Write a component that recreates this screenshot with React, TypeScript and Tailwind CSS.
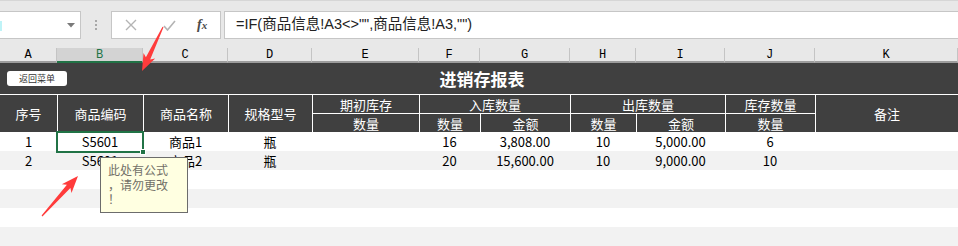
import React from "react";

const COLS =
  "grid grid-cols-[57px_86px_85px_84px_107px_61px_90px_66px_89px_90px_143px]";

const CJK = { fontFamily: '"Noto Sans CJK SC", "Liberation Sans", sans-serif' };

function arrowPts(tx: number, ty: number, px: number, py: number) {
  const dx = px - tx;
  const dy = py - ty;
  const L = Math.hypot(dx, dy);
  const ux = dx / L;
  const uy = dy / L;
  const nx = -uy;
  const ny = ux;
  const head = 17;
  const hw = 6.5;
  const sw = 2.4;
  const bx = px - ux * head;
  const by = py - uy * head;
  const cx = px - ux * (head - 3);
  const cy = py - uy * (head - 3);
  const pts = [
    [tx + nx * 0.6, ty + ny * 0.6],
    [cx + nx * sw, cy + ny * sw],
    [bx + nx * hw, by + ny * hw],
    [px, py],
    [bx - nx * hw, by - ny * hw],
    [cx - nx * sw, cy - ny * sw],
    [tx - nx * 0.6, ty - ny * 0.6],
  ];
  return pts.map((p) => p.map((v) => v.toFixed(1)).join(",")).join(" ");
}

const letters = ["A", "B", "C", "D", "E", "F", "G", "H", "I", "J", "K"];

const rows: string[][] = [
  ["1", "S5601", "商品1", "瓶", "", "16", "3,808.00", "10", "5,000.00", "6", ""],
  ["2", "S5601", "商品2", "瓶", "", "20", "15,600.00", "10", "9,000.00", "10", ""],
];

export default function App() {
  return (
    <div
      className="relative w-[958px] h-[246px] overflow-hidden bg-white"
      style={CJK}
    >
      {/* Formula bar */}
      <div className="h-[48px] bg-[#e8e8e8] border-t border-[#d6d6d6] flex items-start pt-[10px]">
        <div className="relative w-[81px] h-[28px] bg-white border border-l-0 border-[#c6c6c6]">
          <div className="absolute left-0 top-[9px] w-[2px] h-[10px] bg-[#bff3f7]" />
          <svg
            className="absolute left-[67px] top-[11px]"
            width="8"
            height="5"
            viewBox="0 0 8 5"
          >
            <polygon points="0,0 8,0 4,4.5" fill="#7a7a7a" />
          </svg>
        </div>
        <div className="w-[30px] h-[28px] flex flex-col items-center justify-center gap-[2px]">
          <div className="w-[2px] h-[2px] bg-[#a8a8a8]" />
          <div className="w-[2px] h-[2px] bg-[#a8a8a8]" />
          <div className="w-[2px] h-[2px] bg-[#a8a8a8]" />
        </div>
        <div className="w-[110px] h-[28px] bg-white border border-[#c6c6c6] flex items-center">
          <svg className="ml-[13px]" width="12" height="12" viewBox="0 0 12 12">
            <path d="M1 1 L11 11 M11 1 L1 11" stroke="#b4b4b4" strokeWidth="1.4" />
          </svg>
          <svg className="ml-[26px]" width="13" height="11" viewBox="0 0 13 11">
            <path d="M1 6 L4.5 10 L12 1" stroke="#b4b4b4" strokeWidth="1.6" fill="none" />
          </svg>
          <span
            className="ml-[21px] text-[14px] italic font-bold text-[#4a4a4a] leading-none"
            style={{ fontFamily: '"Liberation Serif", serif' }}
          >
            f<span className="text-[11px]">x</span>
          </span>
        </div>
        <div
          className="ml-[3px] flex-1 h-[28px] bg-white border border-r-0 border-[#c6c6c6] flex items-center pl-[11px] text-[14.5px] text-[#222]"
          style={{ fontFamily: '"Liberation Sans", "Noto Sans CJK SC", sans-serif' }}
        >
          =IF(商品信息!A3&lt;&gt;"",商品信息!A3,"")
        </div>
      </div>

      {/* Column letters */}
      <div
        className={`${COLS} h-[15px] bg-[#e8e8e8] text-[12px] text-black`}
        style={{ fontFamily: '"Liberation Mono", monospace' }}
      >
        {letters.map((l, i) => (
          <div
            key={l}
            className={`flex items-center justify-center leading-none border-r border-[#c4c4c4] ${
              i === 1
                ? "bg-[#d3d3d3] text-[#217346] border-b-2 border-b-[#217346]"
                : "border-b-2 border-b-[#9d9d9d]"
            }`}
          >
            {l}
          </div>
        ))}
      </div>

      {/* Title row */}
      <div className="relative h-[31px] bg-[#404040] flex items-center justify-center">
        <div className="absolute left-[7px] top-[8px] w-[60px] h-[15px] rounded-[3px] bg-white flex items-center justify-center text-[9px] text-[#333] leading-none">
          返回菜单
        </div>
        <span className="text-[17px] font-bold text-white ml-[6px]">进销存报表</span>
      </div>

      {/* Header rows */}
      <div
        className={`${COLS} grid-rows-[19px_18px] bg-[#404040] border-t border-white text-white text-[13px] leading-none`}
      >
        <div className="row-span-2 flex items-center justify-center">序号</div>
        <div className="row-span-2 flex items-center justify-center border-l border-white">商品编码</div>
        <div className="row-span-2 flex items-center justify-center border-l border-white">商品名称</div>
        <div className="row-span-2 flex items-center justify-center border-l border-white">规格型号</div>
        <div className="flex items-center justify-center border-l border-b border-white">期初库存</div>
        <div className="col-span-2 flex items-center justify-center border-l border-b border-white">入库数量</div>
        <div className="col-span-2 flex items-center justify-center border-l border-b border-white">出库数量</div>
        <div className="flex items-center justify-center border-l border-b border-white">库存数量</div>
        <div className="row-span-2 flex items-center justify-center border-l border-white">备注</div>
        <div className="flex items-center justify-center border-l border-white">数量</div>
        <div className="flex items-center justify-center border-l border-white">数量</div>
        <div className="flex items-center justify-center border-l border-white">金额</div>
        <div className="flex items-center justify-center border-l border-white">数量</div>
        <div className="flex items-center justify-center border-l border-white">金额</div>
        <div className="flex items-center justify-center border-l border-white">数量</div>
      </div>

      {/* Data rows */}
      <div className="text-[13px] text-black leading-none">
        {[0, 1, 2, 3, 4, 5].map((r) => (
          <div
            key={r}
            className={`${COLS} h-[19px] ${r % 2 === 1 ? "bg-[#f2f2f2]" : "bg-white"}`}
          >
            {(rows[r] ?? Array(11).fill("")).map((v, c) => (
              <div key={c} className="flex items-center justify-center">
                {v}
              </div>
            ))}
          </div>
        ))}
      </div>

      {/* Selection */}
      <div className="absolute left-[56px] top-[131px] w-[88px] h-[22px] border-2 border-[#217346]" />
      <div className="absolute left-[140px] top-[149px] w-[6px] h-[6px] bg-[#217346] border border-white" />

      {/* Comment */}
      <div className="absolute left-[100px] top-[157px] w-[88px] h-[56px] border border-[#6c6c6c] bg-[#ffffe1] text-[12px] leading-[14.5px] text-[#727068] pl-[7px] pt-[5px]">
        <div>此处有公式</div>
        <div>，请勿更改</div>
        <div>！</div>
      </div>

      {/* Arrows */}
      <svg
        className="absolute left-0 top-0 pointer-events-none"
        width="958"
        height="246"
        viewBox="0 0 958 246"
      >
        <polygon points={arrowPts(163, 27, 142, 71)} fill="#ff3b3b" />
        <polygon points={arrowPts(42, 216, 78, 176)} fill="#ff3b3b" />
      </svg>
    </div>
  );
}
